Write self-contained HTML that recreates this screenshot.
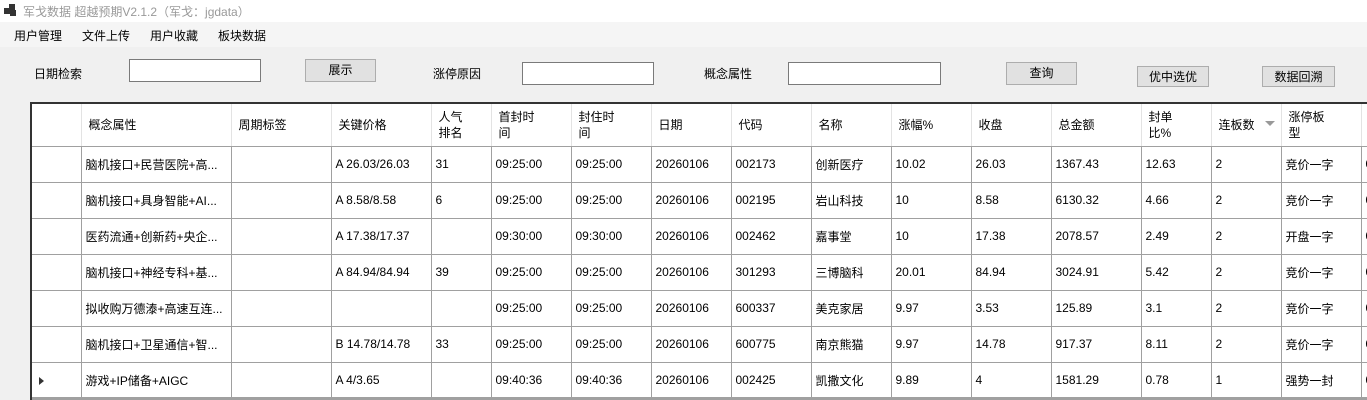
<!DOCTYPE html>
<html><head><meta charset="utf-8"><style>
*{margin:0;padding:0;box-sizing:border-box}
body{width:1367px;height:400px;overflow:hidden;background:#f0f0f0;font-family:"Liberation Sans","Noto Sans CJK SC",sans-serif;font-size:12px;color:#000;position:relative}
.a{position:absolute;white-space:nowrap}
.tb{position:absolute;background:#fff;border:1px solid #7a7a7a}
.bt{position:absolute;background:#e1e1e1;border:1px solid #adadad;text-align:center;line-height:20px}
#g{position:absolute;left:30px;top:102px;width:1337px;height:298px;background:#fff;border-left:2px solid #333;border-top:2px solid #333;overflow:hidden}
table{border-collapse:collapse;table-layout:fixed;position:absolute;left:0;top:0;width:1349px}
td{border-right:1px solid #a0a0a0;border-bottom:1px solid #a0a0a0;height:36px;padding-left:4px;white-space:nowrap;overflow:hidden;vertical-align:middle}
tr.h td{height:42px;border-right:1px solid #e3e3e3;border-bottom:1px solid #a0a0a0;padding-left:7px;line-height:16px}
</style></head><body>
<div class="a" style="left:0;top:0;width:1367px;height:22px;background:#fff"></div>
<div class="a" style="left:4px;top:8px;width:6px;height:6px;background:#333"></div>
<div class="a" style="left:9px;top:4px;width:6px;height:6px;background:#333"></div>
<div class="a" style="left:10px;top:10px;width:6px;height:6px;background:#333"></div>
<div class="a" style="left:23px;top:3px;color:#999;font-size:12px">军戈数据 超越预期V2.1.2（军戈：jgdata）</div>
<div class="a" style="left:0;top:22px;width:1367px;height:25px;background:#f5f5f5"></div>
<div class="a" style="left:14px;top:27px">用户管理</div>
<div class="a" style="left:82px;top:27px">文件上传</div>
<div class="a" style="left:150px;top:27px">用户收藏</div>
<div class="a" style="left:218px;top:27px">板块数据</div>

<div class="a" style="left:34px;top:65px">日期检索</div>
<div class="tb" style="left:129px;top:59px;width:132px;height:23px"></div>
<div class="bt" style="left:305px;top:59px;width:71px;height:23px">展示</div>
<div class="a" style="left:433px;top:65px">涨停原因</div>
<div class="tb" style="left:522px;top:62px;width:132px;height:23px"></div>
<div class="a" style="left:704px;top:65px">概念属性</div>
<div class="tb" style="left:788px;top:62px;width:153px;height:23px"></div>
<div class="bt" style="left:1006px;top:62px;width:71px;height:23px">查询</div>
<div class="bt" style="left:1137px;top:66px;width:72px;height:21px">优中选优</div>
<div class="bt" style="left:1262px;top:66px;width:73px;height:21px">数据回溯</div>

<div id="g"><table>
<colgroup><col style="width:49px"><col style="width:150px"><col style="width:100px"><col style="width:100px"><col style="width:60px"><col style="width:80px"><col style="width:80px"><col style="width:80px"><col style="width:80px"><col style="width:80px"><col style="width:80px"><col style="width:80px"><col style="width:90px"><col style="width:70px"><col style="width:70px"><col style="width:80px"><col style="width:20px"></colgroup>
<tr class="h"><td></td><td>概念属性</td><td>周期标签</td><td>关键价格</td><td>人气<br>排名</td><td>首封时<br>间</td><td>封住时<br>间</td><td>日期</td><td>代码</td><td>名称</td><td>涨幅%</td><td>收盘</td><td>总金额</td><td>封单<br>比%</td><td style="position:relative">连板数<span style="position:absolute;right:6px;top:17px;width:0;height:0;border-left:5px solid transparent;border-right:5px solid transparent;border-top:5px solid #999"></span></td><td>涨停板<br>型</td><td></td></tr>
<tr><td></td><td>脑机接口+民营医院+高...</td><td></td><td>A 26.03/26.03</td><td>31</td><td>09:25:00</td><td>09:25:00</td><td>20260106</td><td>002173</td><td>创新医疗</td><td>10.02</td><td>26.03</td><td>1367.43</td><td>12.63</td><td>2</td><td>竞价一字</td><td>0</td></tr>
<tr><td></td><td>脑机接口+具身智能+AI...</td><td></td><td>A 8.58/8.58</td><td>6</td><td>09:25:00</td><td>09:25:00</td><td>20260106</td><td>002195</td><td>岩山科技</td><td>10</td><td>8.58</td><td>6130.32</td><td>4.66</td><td>2</td><td>竞价一字</td><td>0</td></tr>
<tr><td></td><td>医药流通+创新药+央企...</td><td></td><td>A 17.38/17.37</td><td></td><td>09:30:00</td><td>09:30:00</td><td>20260106</td><td>002462</td><td>嘉事堂</td><td>10</td><td>17.38</td><td>2078.57</td><td>2.49</td><td>2</td><td>开盘一字</td><td>0</td></tr>
<tr><td></td><td>脑机接口+神经专科+基...</td><td></td><td>A 84.94/84.94</td><td>39</td><td>09:25:00</td><td>09:25:00</td><td>20260106</td><td>301293</td><td>三博脑科</td><td>20.01</td><td>84.94</td><td>3024.91</td><td>5.42</td><td>2</td><td>竞价一字</td><td>0</td></tr>
<tr><td></td><td>拟收购万德溙+高速互连...</td><td></td><td></td><td></td><td>09:25:00</td><td>09:25:00</td><td>20260106</td><td>600337</td><td>美克家居</td><td>9.97</td><td>3.53</td><td>125.89</td><td>3.1</td><td>2</td><td>竞价一字</td><td>0</td></tr>
<tr><td></td><td>脑机接口+卫星通信+智...</td><td></td><td>B 14.78/14.78</td><td>33</td><td>09:25:00</td><td>09:25:00</td><td>20260106</td><td>600775</td><td>南京熊猫</td><td>9.97</td><td>14.78</td><td>917.37</td><td>8.11</td><td>2</td><td>竞价一字</td><td>0</td></tr>
<tr><td style="position:relative"><span style="position:absolute;left:7px;top:14px;width:0;height:0;border-top:4px solid transparent;border-bottom:4px solid transparent;border-left:5px solid #333"></span></td><td>游戏+IP储备+AIGC</td><td></td><td>A 4/3.65</td><td></td><td>09:40:36</td><td>09:40:36</td><td>20260106</td><td>002425</td><td>凯撒文化</td><td>9.89</td><td>4</td><td>1581.29</td><td>0.78</td><td>1</td><td>强势一封</td><td>0</td></tr>
</table></div>
<div class="a" style="left:32px;top:397px;width:1335px;height:3px;background:#a0a0a0"></div>
</body></html>
